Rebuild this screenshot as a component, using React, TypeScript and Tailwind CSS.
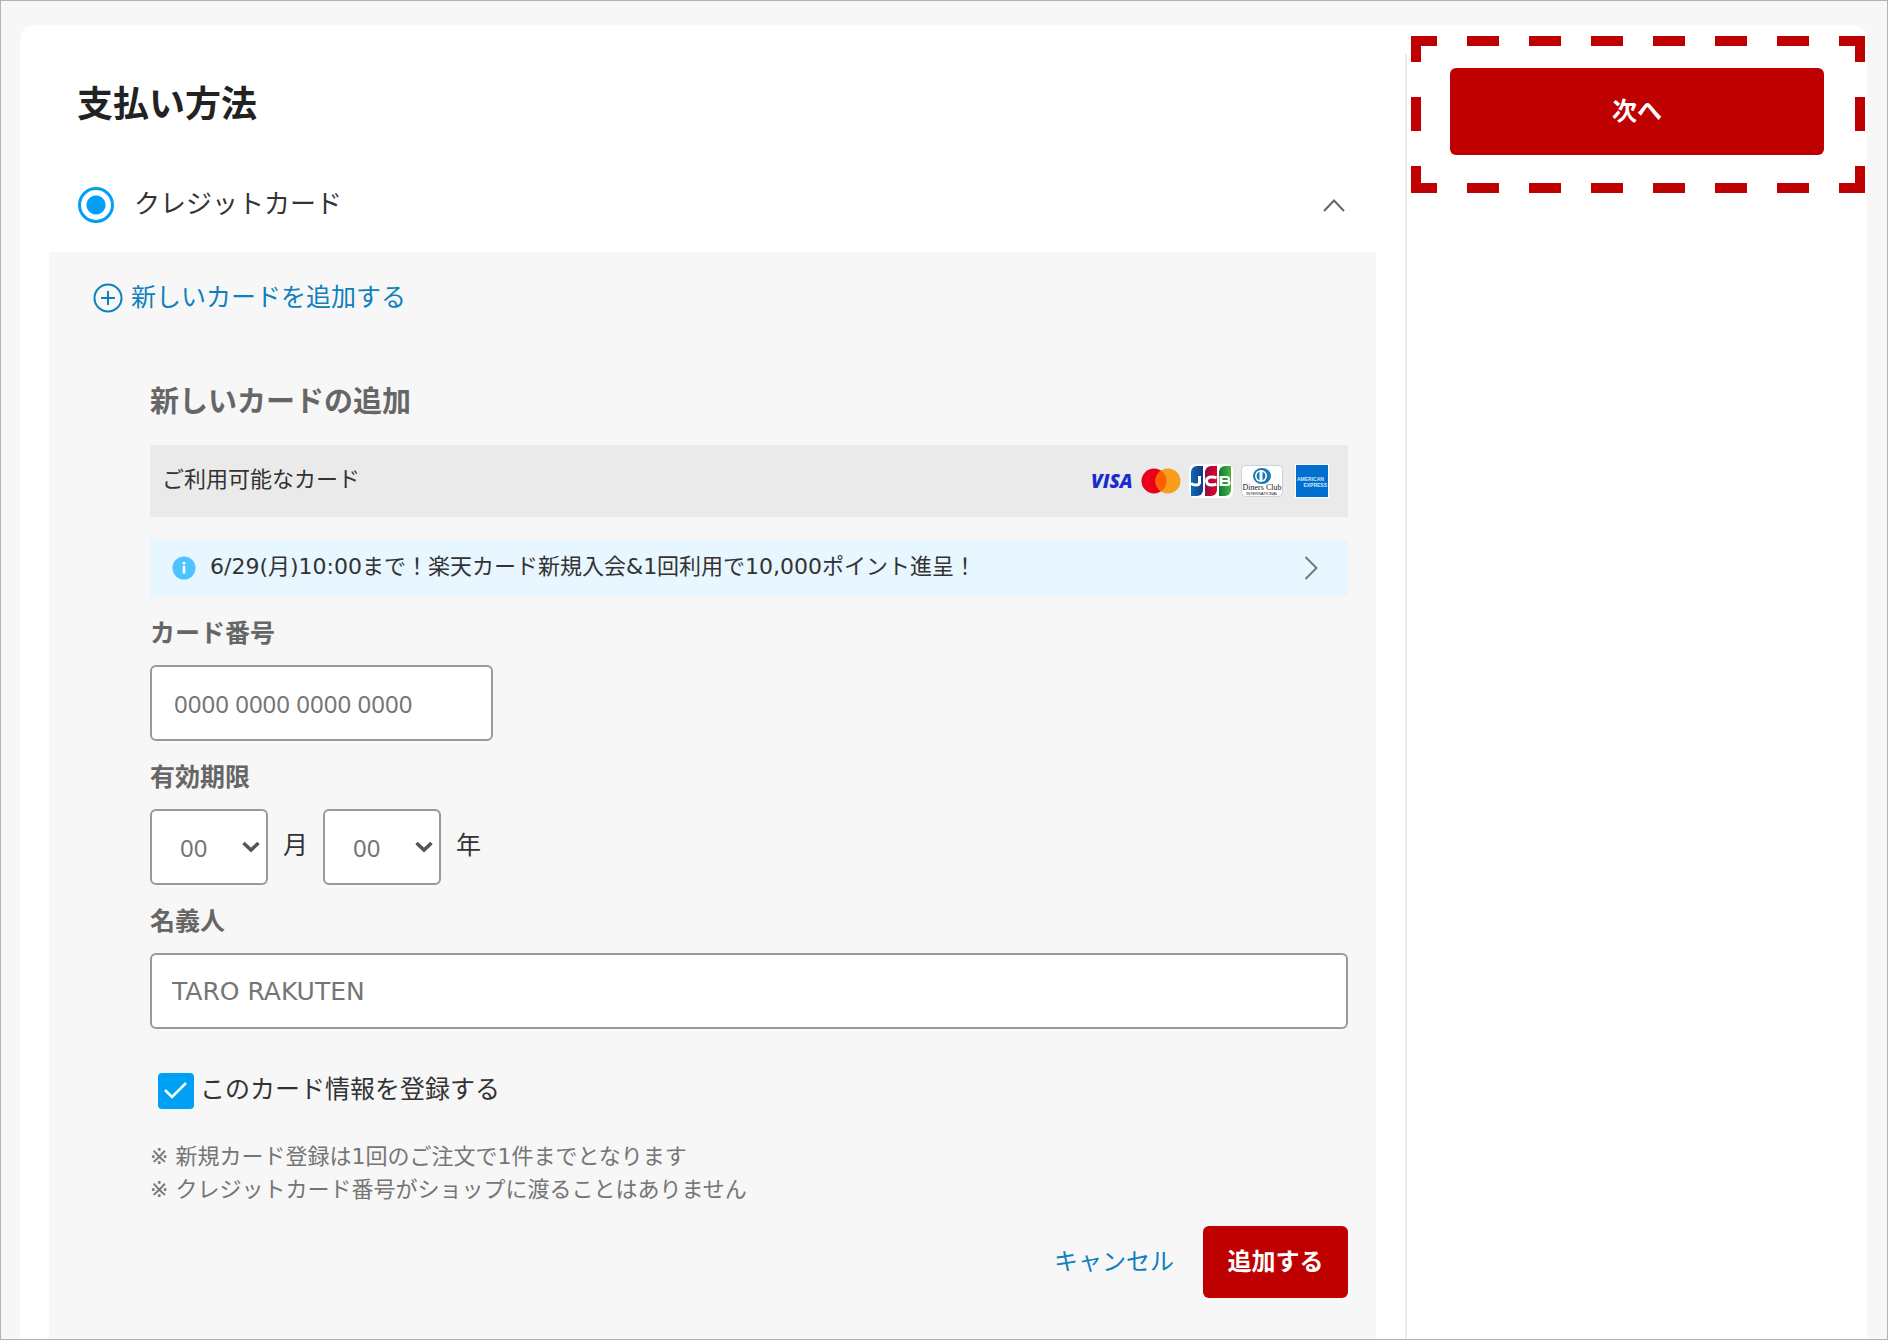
import React from "react";

const label = "block text-[25px] leading-[38px] font-bold text-[#666]";
const field = "box-border h-[76px] rounded-[6px] border-2 border-[#999] bg-white";

function DashedFrame() {
  const h = { stroke: "#bf0000", strokeWidth: 10, strokeDasharray: "32 30", strokeDashoffset: 6 };
  const v = { stroke: "#bf0000", strokeWidth: 10, strokeDasharray: "34 35", strokeDashoffset: 8 };
  return (
    <svg aria-hidden="true" className="pointer-events-none absolute inset-0 h-full w-full" viewBox="0 0 454 157" preserveAspectRatio="none">
      <line x1="0" y1="5" x2="454" y2="5" {...h} />
      <line x1="0" y1="152" x2="454" y2="152" {...h} />
      <line x1="5" y1="0" x2="5" y2="157" {...v} />
      <line x1="449" y1="0" x2="449" y2="157" {...v} />
    </svg>
  );
}

function CardLogos() {
  return (
    <div className="flex items-center">
      <svg width="46" height="28" viewBox="0 0 46 28" role="img" aria-label="VISA">
        <text x="1" y="21" fontFamily="Open Sans, sans-serif" fontWeight="800" fontStyle="italic" fontSize="19" fill="#1a2bd0">VISA</text>
      </svg>
      <svg className="ml-[5px]" width="40" height="26" viewBox="0 0 40 26" role="img" aria-label="Mastercard">
        <circle cx="13" cy="13" r="12.5" fill="#eb001b" />
        <circle cx="27" cy="13" r="12.5" fill="#f79e1b" />
        <path d="M20 2.6a12.5 12.5 0 0 1 0 20.8a12.5 12.5 0 0 1 0-20.8z" fill="#ff5f00" />
      </svg>
      <svg className="ml-2" width="44" height="34" viewBox="0 0 44 34" role="img" aria-label="JCB">
        <defs>
          <linearGradient id="jcb-blue"><stop offset="0" stopColor="#0a6bb8" /><stop offset="1" stopColor="#123b84" /></linearGradient>
          <linearGradient id="jcb-red"><stop offset="0" stopColor="#8c1040" /><stop offset="1" stopColor="#e4002b" /></linearGradient>
          <linearGradient id="jcb-green"><stop offset="0" stopColor="#0c7a3c" /><stop offset="1" stopColor="#4db43c" /></linearGradient>
        </defs>
        <rect width="44" height="34" rx="6" fill="#fff" />
        <path d="M8 2h6v24a6 6 0 0 1-6 6H2V8a6 6 0 0 1 6-6z" fill="url(#jcb-blue)" />
        <path d="M22 2h6v24a6 6 0 0 1-6 6h-6V8a6 6 0 0 1 6-6z" fill="url(#jcb-red)" />
        <path d="M36 2h6v24a6 6 0 0 1-6 6h-6V8a6 6 0 0 1 6-6z" fill="url(#jcb-green)" />
        <g fill="none" stroke="#fff" strokeWidth="3">
          <path d="M10.500 12v6.500q0 2.500-3.500 2.500-3 0-5-1.500" />
          <path d="M27.500 13.800q-2-.8-4.500-.8-5.500 0-5.500 4t5.500 4q2.500 0 4.500-.8" />
          <path d="M31 13h6.500q2.500 0 2.500 2t-2.500 2H31h7q2.500 0 2.500 2T38 21h-7" strokeWidth="2" />
          <path d="M32 12v10" />
        </g>
      </svg>
      <svg className="ml-2" width="42" height="32" viewBox="0 0 42 32" role="img" aria-label="Diners Club">
        <rect x="0.5" y="0.5" width="41" height="31" rx="4" fill="#fff" stroke="#c3d3e0" />
        <ellipse cx="21" cy="11" rx="9" ry="8" fill="#1a78b4" />
        <circle cx="20" cy="11" r="6" fill="#fff" />
        <path d="M18.500 6.800v8.400a4.500 4.500 0 0 1 0-8.400zM21.500 6.800v8.400a4.500 4.500 0 0 0 0-8.400z" fill="#1a78b4" />
        <text x="21" y="25" textAnchor="middle" fontFamily="Liberation Serif, serif" fontSize="8" fill="#222">Diners Club</text>
        <text x="21" y="30" textAnchor="middle" fontFamily="Liberation Sans, sans-serif" fontSize="4" fill="#222">INTERNATIONAL</text>
      </svg>
      <svg className="ml-3" width="34" height="34" viewBox="0 0 34 34" role="img" aria-label="American Express">
        <rect width="34" height="34" fill="#fff" />
        <rect x="1" y="1" width="32" height="32" fill="#016fd0" />
        <text x="2" y="17" fontFamily="Liberation Sans, sans-serif" fontWeight="700" fontSize="5" fill="#d5e8f8">AMERICAN</text>
        <text x="32" y="23" textAnchor="end" fontFamily="Liberation Sans, sans-serif" fontWeight="700" fontSize="5" fill="#d5e8f8">EXPRESS</text>
      </svg>
    </div>
  );
}

function ExpirySelect({ id, name }: { id: string; name: string }) {
  return (
    <div className="relative">
      <select id={id} aria-label={name} className={`${field} w-[118px] appearance-none pt-[2px] pl-7 font-['Noto_Sans'] text-[24px] text-[#757575]`} defaultValue="00">
        <option>00</option>
      </select>
      <svg aria-hidden="true" className="pointer-events-none absolute top-8 right-2" width="18" height="12" viewBox="0 0 18 12" fill="none" stroke="#555" strokeWidth="3.500">
        <path d="M1.500 2L9 9l7.500-7" />
      </svg>
    </div>
  );
}

export default function App() {
  return (
    <div className="min-h-screen border border-[#b3b3b3] bg-[#f7f7f7] font-['DejaVu_Sans','Noto_Sans_CJK_JP',sans-serif] text-[#333]">
      <div className="mt-6 mr-5 ml-[19px] flex rounded-t-[14px] bg-white pr-px">
        <main className="min-w-0 flex-1">
          <h1 className="px-[57px] pt-[52px] text-[36px] leading-[56px] font-bold text-[#222]">支払い方法</h1>
          <div className="mt-[25px] flex h-[94px] items-center justify-between pr-[60px] pl-[58px]">
            <label className="flex items-center text-[26px]">
              <input type="radio" name="payment" defaultChecked className="mr-5 size-9 appearance-none rounded-full border-[3px] border-[#00a0f5] bg-white bg-[radial-gradient(circle,#00a0f5_9px,transparent_10px)]" />
              <span className="pb-[2px]">クレジットカード</span>
            </label>
            <button type="button" aria-label="閉じる">
              <svg width="22" height="13" viewBox="0 0 22 13" fill="none" stroke="#666" strokeWidth="2"><path d="M1 12L11 1.500 21 12" /></svg>
            </button>
          </div>

          <section className="mx-[29px] bg-[#f7f7f7] pr-[28px] pb-[41px] pl-[101px]">
            <button type="button" className="-ml-[57px] flex h-[92px] items-center gap-2 text-[25px] text-[#0f80bd]">
              <svg width="30" height="30" viewBox="0 0 30 30" fill="none" stroke="#0f80bd" strokeWidth="2"><circle cx="15" cy="15" r="13.500" /><path d="M15 8v14M8 15h14" /></svg>
              <span>新しいカードを追加する</span>
            </button>
            <h2 className="pt-9 text-[29px] leading-[44px] font-bold text-[#666]">新しいカードの追加</h2>
            <div className="mt-[21px] flex h-[72px] items-center justify-between bg-[#eaeaea] pr-[19px] pl-3">
              <span className="pb-1 text-[22px]">ご利用可能なカード</span>
              <CardLogos />
            </div>
            <a href="#campaign" className="mt-[22px] flex h-[58px] items-center bg-[#e8f6ff] pr-[30px] pl-[22px] text-[22px]">
              <svg aria-hidden="true" width="24" height="24" viewBox="0 0 24 24"><circle cx="12" cy="12" r="11.500" fill="#4dc4ff" /><path d="M10.700 6h2.600v2.400h-2.600zM10.700 10h2.600v7.500h-2.600z" fill="#fff" /></svg>
              <span className="flex-1 pb-1 pl-[14px]">6/29(月)10:00まで！楽天カード新規入会&amp;1回利用で10,000ポイント進呈！</span>
              <svg aria-hidden="true" width="14" height="24" viewBox="0 0 14 24" fill="none" stroke="#777" strokeWidth="2"><path d="M1.500 1L12.500 12 1.500 23" /></svg>
            </a>

            <label htmlFor="card-number" className={`${label} mt-[18px]`}>カード番号</label>
            <input id="card-number" placeholder="0000 0000 0000 0000" className={`${field} mt-3 block w-[343px] px-[22px] font-['Noto_Sans'] text-[24px] placeholder:text-[#757575]`} />
            <label htmlFor="month" className={`${label} mt-[18px]`}>有効期限</label>
            <div className="mt-3 flex items-center text-[25px]">
              <ExpirySelect id="month" name="月" />
              <span className="mx-[15px] pb-[2px]">月</span>
              <ExpirySelect id="year" name="年" />
              <span className="mx-[15px] pb-[2px]">年</span>
            </div>
            <label htmlFor="holder" className={`${label} mt-[18px]`}>名義人</label>
            <input id="holder" placeholder="TARO RAKUTEN" className={`${field} mt-3 block w-full px-5 text-[25px] placeholder:text-[#757575]`} />

            <label className="mt-[43px] ml-2 flex w-fit items-center gap-[6px] text-[25px] leading-9">
              <span className="relative block size-9">
                <input type="checkbox" defaultChecked className="block size-9 appearance-none rounded-[4px] bg-[#00a0f5]" />
                <svg aria-hidden="true" className="pointer-events-none absolute inset-0" width="36" height="36" viewBox="0 0 36 36" fill="none" stroke="#fff" strokeWidth="2.500"><path d="M7 17l7 7L28 10" /></svg>
              </span>
              <span className="pb-[2px]">このカード情報を登録する</span>
            </label>
            <ul className="mt-[30px] text-[22px] leading-[33px] text-[#757575]">
              <li>※ 新規カード登録は1回のご注文で1件までとなります</li>
              <li>※ クレジットカード番号がショップに渡ることはありません</li>
            </ul>
            <div className="mt-5 flex items-center justify-end gap-[29px]">
              <button type="button" className="text-[24px] text-[#0f80bd]">キャンセル</button>
              <button type="button" className="h-[72px] w-[145px] rounded-[6px] bg-[#bf0000] text-[24px] font-bold text-white">追加する</button>
            </div>
          </section>
        </main>
        <aside className="mt-[29px] w-[461px] border-l-2 border-[#ebebeb]">
          <div className="relative -mt-[18px] ml-1 h-[157px] w-[454px] py-8 pr-[41px] pl-[39px]">
            <DashedFrame />
            <button type="button" className="h-[87px] w-full rounded-[6px] bg-[#bf0000] text-[25px] font-bold text-white">次へ</button>
          </div>
        </aside>
      </div>
    </div>
  );
}
